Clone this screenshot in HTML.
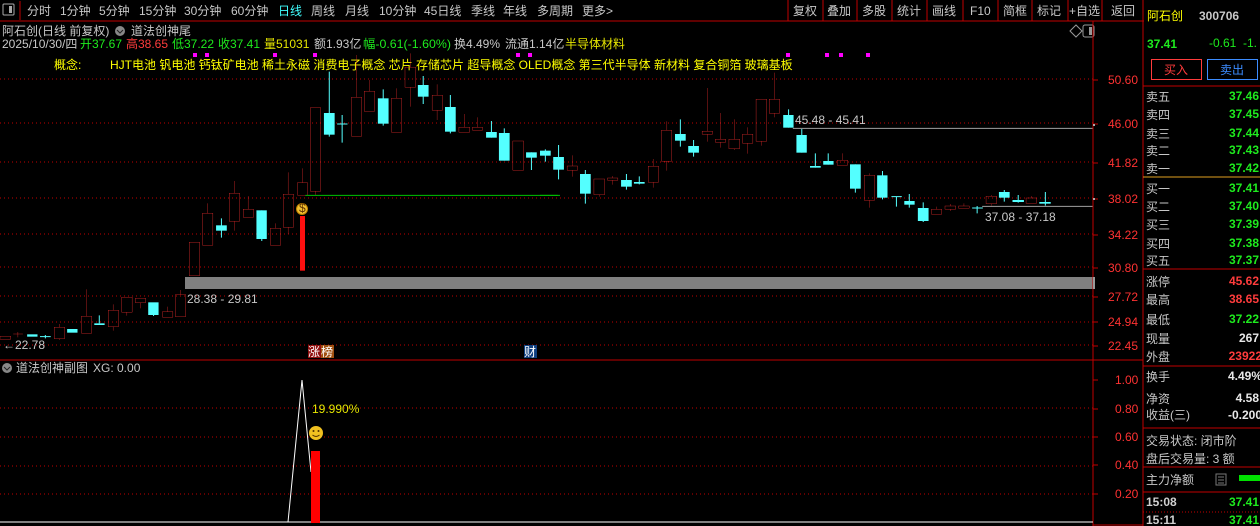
<!DOCTYPE html>
<html><head><meta charset="utf-8"><style>
html,body{margin:0;padding:0;background:#000;width:1260px;height:526px;overflow:hidden}
svg{display:block}
text{font-family:"Liberation Sans","Noto Sans CJK SC",sans-serif;font-size:12px}
.m{fill:#c8c8c8}
.r{fill:none;stroke:#ff3232;stroke-width:1;vector-effect:non-scaling-stroke}
.c{fill:#54ffff}
.cw{fill:none;stroke:#54ffff;stroke-width:1;vector-effect:non-scaling-stroke}
.g{stroke:#c00000;stroke-dasharray:1 3;stroke-width:1}
.lab{fill:#ff3232;font-size:12px}
.pl{fill:#c8c8c8;font-size:15px}
.gv{fill:#1eeb1e;font-size:14px;font-weight:bold}
.rv{fill:#ff3c3c;font-size:14px;font-weight:bold}
.wv{fill:#e8e8e8;font-size:14px;font-weight:bold}
</style></head><body>
<svg width="1260" height="526" viewBox="0 0 1260 526" xmlns="http://www.w3.org/2000/svg">
<rect width="1260" height="526" fill="#000"/>
<rect x="3" y="4" width="11" height="11" fill="none" stroke="#aaa" rx="1"/><rect x="9" y="6" width="3" height="7" fill="#aaa"/>
<line x1="20" y1="1" x2="20" y2="20" stroke="#c00000"/>
<g font-size="12">
<text x="27" y="15" class="m">分时</text><text x="60" y="15" class="m">1分钟</text><text x="99" y="15" class="m">5分钟</text><text x="139" y="15" class="m">15分钟</text><text x="184" y="15" class="m">30分钟</text><text x="231" y="15" class="m">60分钟</text><text x="278" y="15" fill="#40ffff">日线</text><text x="311" y="15" class="m">周线</text><text x="345" y="15" class="m">月线</text><text x="379" y="15" class="m">10分钟</text><text x="424" y="15" class="m">45日线</text><text x="471" y="15" class="m">季线</text><text x="503" y="15" class="m">年线</text><text x="537" y="15" class="m">多周期</text><text x="582" y="15" class="m">更多&gt;</text>
</g>
<g stroke="#c00000"><line x1="788" y1="0" x2="788" y2="21"/><line x1="823" y1="0" x2="823" y2="21"/><line x1="857" y1="0" x2="857" y2="21"/><line x1="892" y1="0" x2="892" y2="21"/><line x1="927" y1="0" x2="927" y2="21"/><line x1="963" y1="0" x2="963" y2="21"/><line x1="998" y1="0" x2="998" y2="21"/><line x1="1032" y1="0" x2="1032" y2="21"/><line x1="1068" y1="0" x2="1068" y2="21"/><line x1="1102" y1="0" x2="1102" y2="21"/></g>
<text x="793" y="15" class="m">复权</text><text x="827" y="15" class="m">叠加</text><text x="862" y="15" class="m">多股</text><text x="897" y="15" class="m">统计</text><text x="932" y="15" class="m">画线</text><text x="970" y="15" class="m">F10</text><text x="1003" y="15" class="m">简框</text><text x="1037" y="15" class="m">标记</text><text x="1069" y="15" class="m">+自选</text><text x="1111" y="15" class="m">返回</text>
<line x1="0" y1="21" x2="1144" y2="21" stroke="#c00000"/>
<text x="2" y="35" class="m" font-size="13">阿石创(日线 前复权)</text>
<circle cx="120" cy="31" r="5" fill="#888"/><path d="M117,30 l3,3 l3,-3" stroke="#222" fill="none"/>
<text x="131" y="35" class="m" font-size="13">道法创神尾</text>
<text x="2" y="48" class="m">2025/10/30/四</text>
<text x="80" y="48" fill="#1eeb1e">开37.67</text><text x="126" y="48" fill="#ff3c3c">高38.65</text><text x="172" y="48" fill="#1eeb1e">低37.22</text><text x="218" y="48" fill="#1eeb1e">收37.41</text><text x="264" y="48" fill="#e6e600">量51031</text><text x="314" y="48" class="m">额1.93亿</text><text x="363" y="48" fill="#1eeb1e" textLength="88" lengthAdjust="spacingAndGlyphs">幅-0.61(-1.60%)</text><text x="454" y="48" class="m">换4.49%</text><text x="505" y="48" class="m">流通1.14亿</text><text x="565" y="48" fill="#e6e600">半导体材料</text>
<g fill="#ff00ff"><rect x="193" y="53" width="4" height="4"/><rect x="205" y="53" width="4" height="4"/><rect x="273" y="53" width="4" height="4"/><rect x="313" y="53" width="4" height="4"/><rect x="516" y="53" width="4" height="4"/><rect x="528" y="53" width="4" height="4"/><rect x="786" y="53" width="4" height="4"/><rect x="825" y="53" width="4" height="4"/><rect x="839" y="53" width="4" height="4"/><rect x="866" y="53" width="4" height="4"/></g>
<text x="54" y="69" fill="#ffff00">概念:</text>
<text x="110" y="69" fill="#ffff00">HJT电池 钒电池 钙钛矿电池 稀土永磁 消费电子概念 芯片 存储芯片 超导概念 OLED概念 第三代半导体 新材料 复合铜箔 玻璃基板</text>
<path d="M1070,31 l6,-6 l6,6 l-6,6z" fill="none" stroke="#999"/>
<rect x="1083" y="25" width="11" height="12" rx="2" fill="none" stroke="#999"/><rect x="1089" y="27" width="3" height="8" fill="#999"/>
<g class="g"><line x1="0" y1="79" x2="1093" y2="79"/><line x1="0" y1="123" x2="1093" y2="123"/><line x1="0" y1="162" x2="1093" y2="162"/><line x1="0" y1="198" x2="1093" y2="198"/><line x1="0" y1="234" x2="1093" y2="234"/><line x1="0" y1="267" x2="1093" y2="267"/><line x1="0" y1="296" x2="1093" y2="296"/><line x1="0" y1="322" x2="1093" y2="322"/><line x1="0" y1="345" x2="1093" y2="345"/>
<line x1="0" y1="408" x2="1093" y2="408"/><line x1="0" y1="437" x2="1093" y2="437"/><line x1="0" y1="466" x2="1093" y2="466"/><line x1="0" y1="494" x2="1093" y2="494"/></g>
<rect x="185" y="277" width="908" height="12" fill="#808080"/>
<g transform="translate(0,60) scale(0.35714,0.33333)">
<g class="r">
<rect x="0" y="829" width="30" height="9"/><rect x="152" y="802" width="29" height="34"/><rect x="228" y="769" width="29" height="51"/><rect x="303" y="751" width="29" height="49"/><rect x="341" y="712" width="29" height="45"/><rect x="379" y="715" width="29" height="13"/><rect x="455" y="755" width="29" height="17"/><rect x="491" y="704" width="29" height="66"/><rect x="530" y="547" width="29" height="100"/><rect x="567" y="460" width="29" height="96"/><rect x="642" y="400" width="29" height="84"/><rect x="681" y="448" width="29" height="24"/><rect x="757" y="505" width="29" height="51"/><rect x="793" y="403" width="29" height="99"/><rect x="833" y="368" width="28" height="38"/><rect x="869" y="143" width="29" height="251"/><rect x="984" y="112" width="29" height="117"/><rect x="1020" y="94" width="29" height="60"/><rect x="1096" y="115" width="29" height="102"/><rect x="1134" y="22" width="30" height="60"/><rect x="1210" y="106" width="29" height="45"/><rect x="1285" y="202" width="30" height="15"/><rect x="1323" y="202" width="28" height="9"/><rect x="1436" y="243" width="30" height="88"/>
<path d="M37,822H64M50,816V832M166,792V802M166,836V840M242,688V769M317,733V751M317,800V812M355,757V767M393,728V745M469,740V755M505,690V704M581,430V460M656,363V400M656,484V512M695,408V448M771,490V505M807,337V403M807,502V522M847,325V368M883,394V405M998,-15V112M1034,60V94M1110,85V115M1149,-20V22M1149,82V140M1224,73V106M1224,151V180M1300,162V202M1337,172V202"/>
</g>
<rect x="840" y="468" width="14" height="164" fill="#ff1010"/>
<g class="c">
<rect x="76" y="823" width="29" height="7"/><rect x="188" y="807" width="29" height="11"/><rect x="264" y="790" width="29" height="5"/><rect x="415" y="727" width="29" height="38"/><rect x="605" y="496" width="30" height="16"/><rect x="718" y="451" width="29" height="86"/><rect x="907" y="159" width="30" height="65"/><rect x="1058" y="115" width="30" height="76"/><rect x="1170" y="75" width="30" height="35"/><rect x="1246" y="141" width="30" height="74"/><rect x="1361" y="216" width="30" height="17"/><rect x="1397" y="219" width="30" height="83"/><rect x="1473" y="277" width="30" height="16"/><rect x="1512" y="272" width="30" height="15"/>
</g>
<path class="cw" d="M112,830H142M127,825V835M278,766V790M430,765V768M620,475V533M733,451V543M922,35V230M944,192H973M958,165V248M1073,88V197M1185,48V132M1261,105V220M1376,183V233M1412,205V302M1488,277V330M1527,268V305"/>
<path d="M855,406H1568" stroke="#00c000" stroke-width="1" vector-effect="non-scaling-stroke"/>
</g>
<g transform="translate(540,60) scale(0.35714,0.33333)">
<g class="r">
<rect x="76" y="318" width="29" height="13"/><rect x="151" y="357" width="30" height="47"/><rect x="189" y="354" width="29" height="7"/><rect x="303" y="319" width="29" height="48"/><rect x="340" y="211" width="29" height="93"/><rect x="454" y="214" width="29" height="9"/><rect x="491" y="238" width="29" height="9"/><rect x="529" y="238" width="30" height="28"/><rect x="567" y="223" width="29" height="27"/><rect x="605" y="118" width="30" height="126"/><rect x="642" y="118" width="29" height="42"/><rect x="832" y="301" width="29" height="15"/><rect x="908" y="346" width="29" height="75"/><rect x="1096" y="448" width="29" height="15"/><rect x="1134" y="438" width="30" height="10"/><rect x="1172" y="438" width="30" height="7"/><rect x="1249" y="409" width="30" height="22"/><rect x="1361" y="414" width="30" height="16"/>
<path d="M91,286V318M91,331V350M166,404V410M203,348V354M203,361V374M317,297V319M317,367V383M355,184V211M355,304V332M469,84V214M469,223V245M505,159V238M505,247V263M544,178V238M544,266V270M581,202V223M581,250V281M620,244V257M656,38V118M656,160V172M847,280V301M922,340V346M922,421V443M1110,440V448M1149,432V438M1149,448V453M1187,430V438M1264,405V409M1264,431V437M1376,408V414"/>
</g>
<g class="c">
<rect x="37" y="291" width="30" height="38"/><rect x="112" y="342" width="30" height="59"/><rect x="227" y="360" width="30" height="20"/><rect x="263" y="366" width="30" height="5"/><rect x="378" y="222" width="30" height="20"/><rect x="415" y="258" width="30" height="20"/><rect x="681" y="165" width="29" height="38"/><rect x="718" y="225" width="29" height="53"/><rect x="756" y="318" width="30" height="5"/><rect x="793" y="303" width="29" height="11"/><rect x="868" y="313" width="30" height="73"/><rect x="944" y="346" width="29" height="67"/><rect x="1020" y="423" width="29" height="11"/><rect x="1058" y="444" width="30" height="39"/><rect x="1285" y="396" width="30" height="17"/><rect x="1323" y="420" width="32" height="6"/><rect x="1398" y="426" width="32" height="5"/>
</g>
<path class="cw" d="M52,255V358M127,330V431M242,342V389M278,349V373M393,178V260M430,240V290M696,148V203M733,207V278M771,280V323M807,280V314M883,313V398M959,333V418M984,410H1013M998,410V440M1034,402V443M1073,427V486M1210,444H1240M1224,438V460M1300,390V425M1339,405V428M1415,396V437"/>
<path d="M0,406H50" stroke="#00c000" stroke-width="1" vector-effect="non-scaling-stroke"/>
<path d="M708,205H1548M1238,439H1548" stroke="#a0a0a0" stroke-width="1" vector-effect="non-scaling-stroke"/>
</g>
<circle cx="302" cy="209" r="5.5" fill="#f0c030" stroke="#c08000"/><text x="299" y="212" font-size="7" fill="#603000">$</text>
<text x="795" y="124" fill="#c8c8c8" font-size="13">45.48 - 45.41</text>
<text x="985" y="221" fill="#c8c8c8" font-size="13">37.08 - 37.18</text>
<text x="187" y="303" fill="#c8c8c8" font-size="13">28.38 - 29.81</text>
<text x="3" y="349" fill="#c8c8c8" font-size="13">←22.78</text>
<rect x="308" y="345" width="13" height="13" fill="#901010"/><text x="308" y="356" fill="#fff">涨</text>
<rect x="321" y="345" width="13" height="13" fill="#a05010"/><text x="321" y="356" fill="#fff">榜</text>
<rect x="524" y="345" width="13" height="13" fill="#104080"/><text x="524" y="356" fill="#fff">财</text>
<line x1="1093" y1="21" x2="1093" y2="526" stroke="#c00000"/>
<line x1="1143" y1="0" x2="1143" y2="526" stroke="#c00000"/>
<line x1="0" y1="360" x2="1143" y2="360" stroke="#c00000"/>
<line x1="1093" y1="525" x2="1143" y2="525" stroke="#c00000"/>
<g stroke="#c00000"><line x1="1093" y1="80" x2="1098" y2="80"/><line x1="1093" y1="124" x2="1098" y2="124"/><line x1="1093" y1="163" x2="1098" y2="163"/><line x1="1093" y1="199" x2="1098" y2="199"/><line x1="1093" y1="235" x2="1098" y2="235"/><line x1="1093" y1="268" x2="1098" y2="268"/><line x1="1093" y1="297" x2="1098" y2="297"/><line x1="1093" y1="322" x2="1098" y2="322"/><line x1="1093" y1="346" x2="1098" y2="346"/>
<line x1="1093" y1="380" x2="1098" y2="380"/><line x1="1093" y1="409" x2="1098" y2="409"/><line x1="1093" y1="437" x2="1098" y2="437"/><line x1="1093" y1="465" x2="1098" y2="465"/><line x1="1093" y1="494" x2="1098" y2="494"/></g>
<rect x="1093" y="124" width="2" height="2" fill="#aaa"/><rect x="1093" y="198" width="2" height="2" fill="#aaa"/><rect x="1093" y="277" width="2" height="12" fill="#999"/>
<g class="lab"><text x="1108" y="84">50.60</text><text x="1108" y="128">46.00</text><text x="1108" y="167">41.82</text><text x="1108" y="203">38.02</text><text x="1108" y="239">34.22</text><text x="1108" y="272">30.80</text><text x="1108" y="301">27.72</text><text x="1108" y="326">24.94</text><text x="1108" y="350">22.45</text>
<text x="1115" y="384">1.00</text><text x="1115" y="413">0.80</text><text x="1115" y="441">0.60</text><text x="1115" y="469">0.40</text><text x="1115" y="498">0.20</text></g>
<circle cx="7" cy="368" r="5" fill="#888"/><path d="M4,367 l3,3 l3,-3" stroke="#222" fill="none"/>
<text x="16" y="372" class="m">道法创神副图</text><text x="93" y="372" class="m">XG: 0.00</text>
<line x1="0" y1="522" x2="1093" y2="522" stroke="#fff"/>
<polyline points="288,522 302,380 311,472" fill="none" stroke="#fff"/>
<rect x="311" y="451" width="9" height="72" fill="#ff0000"/>
<circle cx="316" cy="433" r="7" fill="#f0c020"/><circle cx="313.5" cy="431" r="1" fill="#503000"/><circle cx="318.5" cy="431" r="1" fill="#503000"/><path d="M312.5,435 q3.5,3 7,0" stroke="#503000" fill="none"/>
<text x="312" y="413" fill="#e6e600">19.990%</text>
<text x="1147" y="20" fill="#ffff00" font-size="16">阿石创</text><text x="1199" y="20" fill="#c8c8c8" font-size="13" font-weight="bold">300706</text>
<text x="1147" y="48" fill="#1eeb1e" font-size="18" font-weight="bold">37.41</text><text x="1209" y="47" fill="#1eeb1e" font-size="13">-0.61</text><text x="1243" y="47" fill="#1eeb1e" font-size="13">-1.</text>
<rect x="1151.5" y="59.5" width="50" height="20" fill="none" stroke="#ff3c3c"/><text x="1164" y="74" fill="#ff3c3c">买入</text>
<rect x="1207.5" y="59.5" width="50" height="20" fill="none" stroke="#3c8cff"/><text x="1220" y="74" fill="#3c8cff">卖出</text>
<line x1="1143" y1="86" x2="1260" y2="86" stroke="#c00000"/>
<line x1="1143" y1="177" x2="1260" y2="177" stroke="#e0a020"/>
<line x1="1143" y1="269" x2="1260" y2="269" stroke="#c00000"/>
<line x1="1143" y1="366" x2="1260" y2="366" stroke="#c00000"/>
<line x1="1143" y1="428" x2="1260" y2="428" stroke="#c00000"/>
<line x1="1143" y1="467" x2="1260" y2="467" stroke="#c00000"/>
<line x1="1143" y1="492" x2="1260" y2="492" stroke="#c00000"/>
<line x1="1143" y1="512" x2="1260" y2="512" stroke="#c00000" stroke-dasharray="1 2"/>
<g class="pl"><text x="1146" y="101">卖五</text><text x="1146" y="119">卖四</text><text x="1146" y="138">卖三</text><text x="1146" y="155">卖二</text><text x="1146" y="173">卖一</text><text x="1146" y="193">买一</text><text x="1146" y="211">买二</text><text x="1146" y="229">买三</text><text x="1146" y="248">买四</text><text x="1146" y="265">买五</text><text x="1146" y="286">涨停</text><text x="1146" y="304">最高</text><text x="1146" y="324">最低</text><text x="1146" y="343">现量</text><text x="1146" y="361">外盘</text><text x="1146" y="381">换手</text><text x="1146" y="403">净资</text><text x="1146" y="419">收益(三)</text><text x="1146" y="445">交易状态: 闭市阶</text><text x="1146" y="463">盘后交易量: 3 额</text><text x="1146" y="484">主力净额</text></g>
<rect x="1216" y="474" width="10" height="11" fill="none" stroke="#777"/><line x1="1218" y1="477" x2="1224" y2="477" stroke="#777"/><line x1="1218" y1="480" x2="1224" y2="480" stroke="#777"/><line x1="1218" y1="483" x2="1224" y2="483" stroke="#777"/>
<rect x="1239" y="475" width="21" height="6" fill="#00e000"/>
<g text-anchor="end"><g class="gv"><text x="1259" y="100">37.46</text><text x="1259" y="118">37.45</text><text x="1259" y="137">37.44</text><text x="1259" y="154">37.43</text><text x="1259" y="172">37.42</text><text x="1259" y="192">37.41</text><text x="1259" y="210">37.40</text><text x="1259" y="228">37.39</text><text x="1259" y="247">37.38</text><text x="1259" y="264">37.37</text><text x="1259" y="323">37.22</text><text x="1259" y="506">37.41</text><text x="1259" y="524">37.41</text></g>
<g class="rv"><text x="1259" y="285">45.62</text><text x="1259" y="303">38.65</text><text x="1262" y="360">23922</text></g>
<g class="wv"><text x="1259" y="342">267</text><text x="1262" y="380">4.49%</text><text x="1259" y="402">4.58</text><text x="1262" y="419">-0.200</text></g></g>
<text x="1146" y="506" fill="#d0d0d0" font-size="14" font-weight="bold">15:08</text>
<text x="1146" y="524" fill="#d0d0d0" font-size="14" font-weight="bold">15:11</text>
</svg>
</body></html>
